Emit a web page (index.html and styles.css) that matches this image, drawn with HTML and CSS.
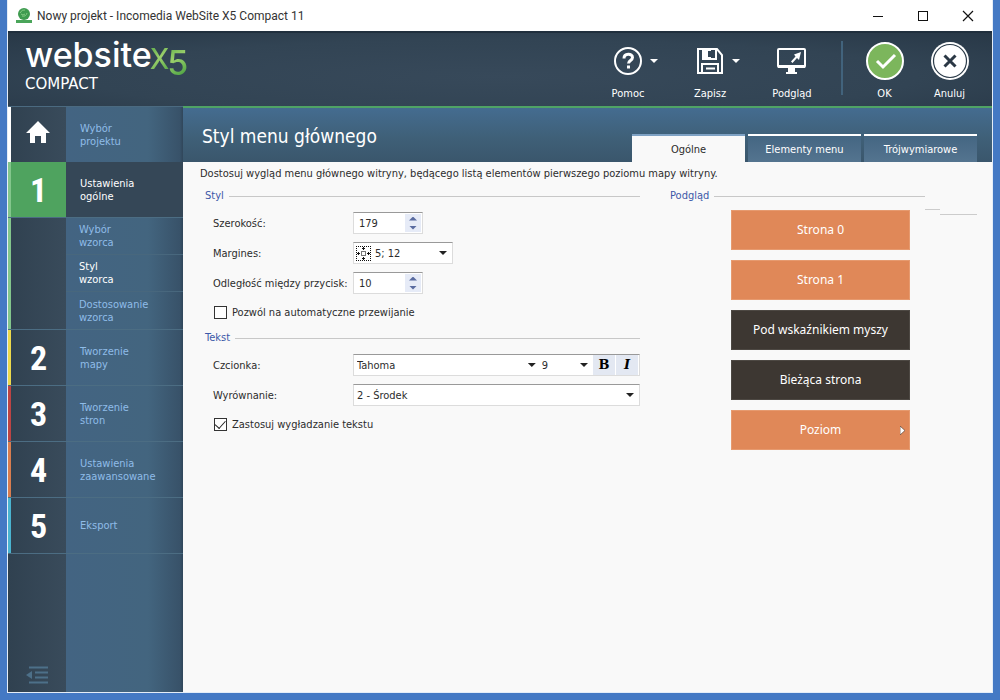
FILE: index.html
```html
<!DOCTYPE html>
<html lang="pl">
<head>
<meta charset="utf-8">
<title>Nowy projekt - Incomedia WebSite X5 Compact 11</title>
<link rel="stylesheet" href="styles.css">
</head>
<body>
<div class="window">
  <header class="titlebar">
    <svg class="app-icon" width="16" height="16" viewBox="0 0 16 16"><circle cx="8" cy="6" r="6" fill="#3f9b50"/><path d="M4 5q2-4 5-3M6 8q4 1 5-3M5 6q2 2 4 0" stroke="#83ca83" fill="none"/><rect y="12" width="16" height="3" fill="#4aa55a"/></svg>
    <span class="window-title">Nowy projekt - Incomedia WebSite X5 Compact 11</span>
    <div class="window-controls">
      <button type="button" aria-label="Minimalizuj"><svg width="12" height="12" viewBox="0 0 12 12"><path d="M1 6.500h10" stroke="#111"/></svg></button>
      <button type="button" aria-label="Maksymalizuj"><svg width="12" height="12" viewBox="0 0 12 12"><rect x="1.500" y="1.500" width="9" height="9" fill="none" stroke="#111"/></svg></button>
      <button type="button" aria-label="Zamknij"><svg width="12" height="12" viewBox="0 0 12 12"><path d="M1 1l10 10M11 1L1 11" stroke="#111" stroke-width="1.200"/></svg></button>
    </div>
  </header>

  <div class="toolbar">
    <div class="logo">
      <div class="logo-name">website<span class="logo-x">X</span><span class="logo-five">5</span></div>
      <div class="logo-edition">COMPACT</div>
    </div>
    <div class="tools">
      <button type="button" class="tool"><span class="tool-icon"><svg width="30" height="30" viewBox="0 0 30 30" fill="none" stroke="#fff"><circle cx="15" cy="15" r="13" stroke-width="2"/><path d="M11 12.500c0-5.500 8.500-5.500 8.500-1 0 3-4 3-4 6" stroke-width="3"/><path d="M15.500 19.500v3" stroke-width="3"/></svg><span class="caret"></span></span><span>Pomoc</span></button>
      <button type="button" class="tool"><span class="tool-icon"><svg width="30" height="30" viewBox="0 0 30 30" fill="none" stroke="#fff" stroke-width="2"><path d="M3 3h19l5 6v18H3z"/><path d="M8 3v10h13V3M7 27v-9h16v9M11 22.500h9"/><rect x="8" y="3" width="8" height="9" fill="#fff" stroke="none"/><path d="M14.500 5v6" stroke="#334556" stroke-width="3"/></svg><span class="caret"></span></span><span>Zapisz</span></button>
      <button type="button" class="tool"><span class="tool-icon"><svg width="30" height="30" viewBox="0 0 30 30"><rect x="1" y="3" width="27" height="18" rx="1" fill="none" stroke="#fff" stroke-width="2"/><path d="M1 19h27v3H1z" fill="#fff"/><path d="M11 22h7v4h2v2H9v-2h2z" fill="#fff"/><path d="M24 6l-2 8-2-2-4.500 5-1.500-1.500 4.500-5L17 8.500z" fill="#fff"/></svg></span><span>Podgląd</span></button>
      <span class="divider"></span>
      <button type="button" class="tool tool-round"><span class="tool-icon"><svg width="40" height="40" viewBox="0 0 40 40"><circle cx="20" cy="20" r="18" fill="#7cb65c" stroke="#fff" stroke-width="2"/><path d="M12 20l6 6 12-12" fill="none" stroke="#fff" stroke-width="3"/></svg></span><span>OK</span></button>
      <button type="button" class="tool tool-round"><span class="tool-icon"><svg width="40" height="40" viewBox="0 0 40 40"><circle cx="20" cy="20" r="19" fill="#fff"/><circle cx="20" cy="20" r="16.500" fill="#fff" stroke="#2c3c4a" stroke-width="1.200"/><path d="M14.500 14.500l11 11M25.500 14.500l-11 11" stroke="#2b3845" stroke-width="3"/></svg></span><span>Anuluj</span></button>
    </div>
  </div>

  <div class="workspace">
    <nav class="steps">
      <a href="#projekt" class="step home"><span class="strip"></span><span class="num"><svg width="24" height="22" viewBox="0 0 24 22"><path d="M12 0l12 12h-4v10h-5v-7H9v7H4V12H0z" fill="#fff"/></svg></span><span class="step-label">Wybór<br>projektu</span></a>
      <a href="#ogolne" class="step current"><span class="strip"></span><span class="num">1</span><span class="step-label">Ustawienia<br>ogólne</span></a>
      <div class="substeps">
        <span class="strip"></span><span class="num"></span>
        <div class="sublist">
          <a href="#wybor">Wybór<br>wzorca</a>
          <a href="#styl" class="active">Styl<br>wzorca</a>
          <a href="#dostosowanie">Dostosowanie<br>wzorca</a>
        </div>
      </div>
      <a href="#mapa" class="step yellow"><span class="strip"></span><span class="num">2</span><span class="step-label">Tworzenie<br>mapy</span></a>
      <a href="#strony" class="step red"><span class="strip"></span><span class="num">3</span><span class="step-label">Tworzenie<br>stron</span></a>
      <a href="#zaawansowane" class="step orange"><span class="strip"></span><span class="num">4</span><span class="step-label">Ustawienia<br>zaawansowane</span></a>
      <a href="#eksport" class="step cyan"><span class="strip"></span><span class="num">5</span><span class="step-label">Eksport</span></a>
      <div class="steps-end">
        <button type="button" class="collapse" aria-label="Zwiń panel"><svg width="22" height="18" viewBox="0 0 22 18"><path d="M3 1.500h19M9 6.500h13M9 11.500h13M3 16.500h19" stroke="#4d7089" stroke-width="2"/><path d="M0 9l6-4v8z" fill="#4d7089"/></svg></button>
      </div>
    </nav>

    <main class="content">
      <div class="content-head">
        <h1>Styl menu głównego</h1>
        <div class="tabs" role="tablist">
          <button type="button" role="tab" class="tab selected" aria-selected="true">Ogólne</button>
          <button type="button" role="tab" class="tab" aria-selected="false">Elementy menu</button>
          <button type="button" role="tab" class="tab" aria-selected="false">Trójwymiarowe</button>
        </div>
      </div>
      <p class="intro">Dostosuj wygląd menu głównego witryny, będącego listą elementów pierwszego poziomu mapy witryny.</p>
      <div class="panels">
        <form class="settings">
          <h2>Styl</h2>
          <div class="fields">
            <div class="field"><label for="width">Szerokość:</label>
              <div class="box number"><input id="width" type="text" inputmode="numeric" value="179"><span class="spin"><button type="button" class="up" aria-label="Zwiększ szerokość"></button><button type="button" class="down" aria-label="Zmniejsz szerokość"></button></span></div></div>
            <div class="field"><label for="margin">Margines:</label>
              <div class="box margin"><svg width="17" height="17" viewBox="0 0 17 17" fill="none" stroke="#111"><path d="M1 1.500h15M1 15.500h15M1.500 1v15M15.500 1v15" stroke-dasharray="1 1"/><rect x="6.500" y="6.500" width="4" height="4" stroke="#777"/><path d="M8.500 2v3M8.500 12v3M2 8.500h3M12 8.500h3M7 3.500h3M7 13.500h3M3.500 7v3M13.500 7v3"/></svg><span class="pick"><select id="margin"><option>5; 12</option></select></span></div></div>
            <div class="field"><label for="gap">Odległość między przycisk:</label>
              <div class="box number"><input id="gap" type="text" inputmode="numeric" value="10"><span class="spin"><button type="button" class="up" aria-label="Zwiększ odległość"></button><button type="button" class="down" aria-label="Zmniejsz odległość"></button></span></div></div>
            <label class="check"><input type="checkbox">Pozwól na automatyczne przewijanie</label>
          </div>
          <h2>Tekst</h2>
          <div class="fields">
            <div class="field"><label for="font">Czcionka:</label>
              <div class="box font"><span class="pick family"><select id="font"><option>Tahoma</option></select></span><span class="pick size"><select aria-label="Rozmiar"><option>9</option></select></span><button type="button" class="style-button bold" aria-label="Pogrubienie">B</button><button type="button" class="style-button italic" aria-label="Kursywa">I</button></div></div>
            <div class="field"><label for="align">Wyrównanie:</label>
              <div class="box wide"><span class="pick"><select id="align"><option>2 - Środek</option></select></span></div></div>
            <label class="check"><input type="checkbox" checked>Zastosuj wygładzanie tekstu</label>
          </div>
        </form>
        <section class="preview">
          <h2>Podgląd<svg class="rule-tail" width="52" height="16" viewBox="0 0 52 16" fill="none" stroke="#ccc"><path d="M0 21.500h15M15 26.500h37"/></svg></h2>
          <div class="menu">
            <a href="#s0">Strona 0</a>
            <a href="#s1">Strona 1</a>
            <a href="#s2" class="dark">Pod wskaźnikiem myszy</a>
            <a href="#s3" class="dark">Bieżąca strona</a>
            <a href="#s4" class="parent"><span>Poziom</span><svg width="6" height="9" viewBox="0 0 6 9"><path d="M0 0l5 4.500L0 9z" fill="#fff" stroke="#5b4436" stroke-width=".7"/></svg></a>
          </div>
        </section>
      </div>
    </main>
  </div>
</div>
</body>
</html>
```
FILE: styles.css
```css
* { box-sizing: border-box; }
body {
  margin: 0;
  background: #4479c4;
  font: 11px/13px "DejaVu Sans Condensed", "Noto Sans", sans-serif;
  color: #2c2c2c;
}
button, input, select { font: inherit; color: inherit; margin: 0; padding: 0; border: 0; background: none; border-radius: 0; }
a { color: inherit; text-decoration: none; }
h1, h2, p { margin: 0; font-weight: 400; }

.window {
  display: flex;
  flex-direction: column;
  min-height: calc(100vh - 7px);
  margin: 0 7px 7px;
  border: solid #e4edf8;
  border-width: 0 1px 1px;
}

.titlebar { display: flex; align-items: center; height: 31px; padding: 0 2px 0 8px; background: #fff; }
.window-title { margin-left: 5px; font: 12px/16px Roboto, sans-serif; color: #333; }
.window-controls { display: flex; margin-left: auto; }
.window-controls button { display: grid; place-items: center; width: 45px; height: 31px; }

.toolbar {
  display: flex;
  justify-content: space-between;
  min-height: 75px;
  border-top: 2px solid #202f3d;
  background: radial-gradient(ellipse at 50% 60%, #37495a, #324454 60%, #283847);
  color: #fff;
}
.logo { padding: 5px 0 0 17px; }
.logo-name { display: flex; height: 39px; font: 500 34px/34px Inter, sans-serif; }
.logo-x, .logo-five { background: linear-gradient(150deg, #3e9a3c, #9bd06b 50%, #3e9a3c); background-clip: text; color: transparent; }
.logo-x { font-size: 28px; line-height: 42px; margin-left: -2px; }
.logo-five { font-size: 34px; line-height: 50px; margin-left: -2px; }
.logo-edition { font: 15px/15px "DejaVu Sans", sans-serif; }
.tools { display: flex; padding-right: 10px; }
.tool { display: flex; flex-direction: column; align-items: center; width: 82px; padding-top: 8px; }
.tool-round { width: 65px; }
.tool-icon { display: grid; grid-template-columns: 1fr auto 1fr; width: 100%; height: 40px; margin-bottom: 6px; align-items: center; }
.tool-icon svg { grid-column: 2; }
.caret { grid-column: 3; width: 8px; height: 4px; margin-left: 7px; background: #fff; clip-path: polygon(0 0, 100% 0, 50% 100%); }
.divider { width: 2px; height: 54px; margin: 8px 9px 0 8px; background: #42637c; }

.workspace { display: grid; grid-template-columns: 175px 1fr; flex: 1; }
.steps { display: flex; flex-direction: column; background: linear-gradient(90deg, #304150, #394b5b 58px, #436482 58px, #43657f 140px, #385269 172px, #30465a); color: #8fbce8; }
.step { display: grid; grid-template-columns: 3px 55px 1fr; min-height: 56px; border-bottom: 1px solid #4c6d83; }
.step:first-child { border-top: 1px solid #4b6a80; border-bottom: 0; }
.strip { background: var(--mark); }
.num { display: grid; place-items: center; color: #fff; font: 700 34px/40px "Roboto Condensed", Roboto, sans-serif; }
.step-label { align-self: center; padding-left: 14px; }
.home { --mark: #fff; }
.home .num { padding: 0 2px 6px 0; }
.current { --mark: #83c68c; background: #354757; color: #fff; }
.current .num { background: #4fa35f; }
.yellow { --mark: #ecd94c; }
.red { --mark: #bd4444; }
.orange { --mark: #d97d4f; }
.cyan { --mark: #4ab4d0; }
.substeps { --mark: #83c68c; display: grid; grid-template-columns: 3px 55px 1fr; border-bottom: 1px solid #4c6d83; }
.sublist a { display: grid; align-items: center; min-height: 37px; padding-left: 13px; border-bottom: 1px solid #48677d; }
.sublist a:last-child { border-bottom: 0; }
.sublist .active { color: #fff; }
.steps-end { display: flex; flex: 1; align-items: flex-end; padding: 0 0 8px 18px; }
.collapse { display: flex; }

.content { background: #f9f9f9; }
.content-head {
  display: flex;
  justify-content: space-between;
  min-height: 56px;
  padding: 0 15px 0 19px;
  border-top: 2px solid #4fa365;
  background: linear-gradient(#446c90, #3f6078 55%, #3a566c);
  color: #fff;
}
h1 { align-self: center; font: 19px/24px "DejaVu Sans Condensed", "Noto Sans", sans-serif; padding-top: 2px; }
.tabs { display: grid; grid-template-columns: repeat(3, 113px); gap: 3px; align-self: flex-end; }
.tab { height: 28px; border-top: 2px solid #fff; background: linear-gradient(#446682, #54748f); color: #fff; }
.tab.selected { border-top-color: #7fa2c4; background: #f9f9f9; color: #2c2c2c; }
.intro { padding: 5px 17px 7px; }
.panels { display: grid; grid-template-columns: 435fr 307fr; gap: 30px; padding: 0 15px 0 22px; }
h2 { display: flex; align-items: center; height: 18px; font-size: 11px; line-height: 18px; color: #3c58a8; margin-bottom: 7px; }
h2::after { content: ""; flex: 1; height: 1px; margin-left: 5px; background: #c8c8c8; }

.fields { display: grid; gap: 8px; padding-left: 8px; margin-bottom: 7px; }
.field { display: grid; grid-template-columns: 140px 1fr; align-items: center; }
.field label { white-space: nowrap; }
.box { display: flex; align-items: center; height: 22px; border: 1px solid #dcdcdc; border-top-color: #999; background: #fff; }
.number { width: 70px; }
.number input { flex: 1; min-width: 0; padding-left: 5px; }
.spin { display: grid; width: 16px; height: 18px; margin-right: 1px; background: #e6ebf7; }
.spin button { display: grid; place-items: center; }
.spin button::after { content: ""; width: 8px; height: 4px; background: #596ba0; clip-path: polygon(50% 0, 100% 100%, 0 100%); }
.spin .down::after { clip-path: polygon(0 0, 100% 0, 50% 100%); }
.margin { width: 100px; padding-left: 1px; }
.pick { display: grid; flex: 1; align-items: center; }
.pick select { grid-area: 1 / 1; width: 100%; height: 20px; padding-left: 3px; appearance: none; }
.pick::after { content: ""; grid-area: 1 / 1; justify-self: end; width: 8px; height: 4px; margin-right: 5px; background: #222; clip-path: polygon(0 0, 100% 0, 50% 100%); pointer-events: none; }
.family { flex: 186; }
.size { flex: 52; }
.size select { padding-left: 1px; }
.style-button { width: 22px; height: 20px; margin-right: 1px; background: #e3e8f2; color: #000; font: 700 13px/20px "DejaVu Serif", serif; }
.italic { font-style: italic; }
.check { display: flex; align-items: center; height: 20px; }
.check input { appearance: none; display: grid; place-items: center; width: 13px; height: 13px; margin: 0 5px 0 1px; border: 1px solid #333; background: #fff; }
.check input:checked::after { content: ""; width: 9px; height: 5px; border: solid #222; border-width: 0 0 1px 1px; transform: rotate(-48deg) translateY(-1px); }

.preview h2 { margin-bottom: 5px; }
.rule-tail { order: 2; overflow: visible; }
.menu { display: grid; gap: 10px; padding: 0 67px 0 61px; }
.menu a { display: grid; place-items: center; height: 40px; border: 1px solid #e69a6f; background: #e08858; color: #fff; font: 12px/16px "Noto Sans", sans-serif; }
.menu .dark { border-color: #4d4843; background: #3d3732; }
.menu .parent > * { grid-area: 1 / 1; }
.menu .parent svg { justify-self: end; margin-right: 3px; }
```
